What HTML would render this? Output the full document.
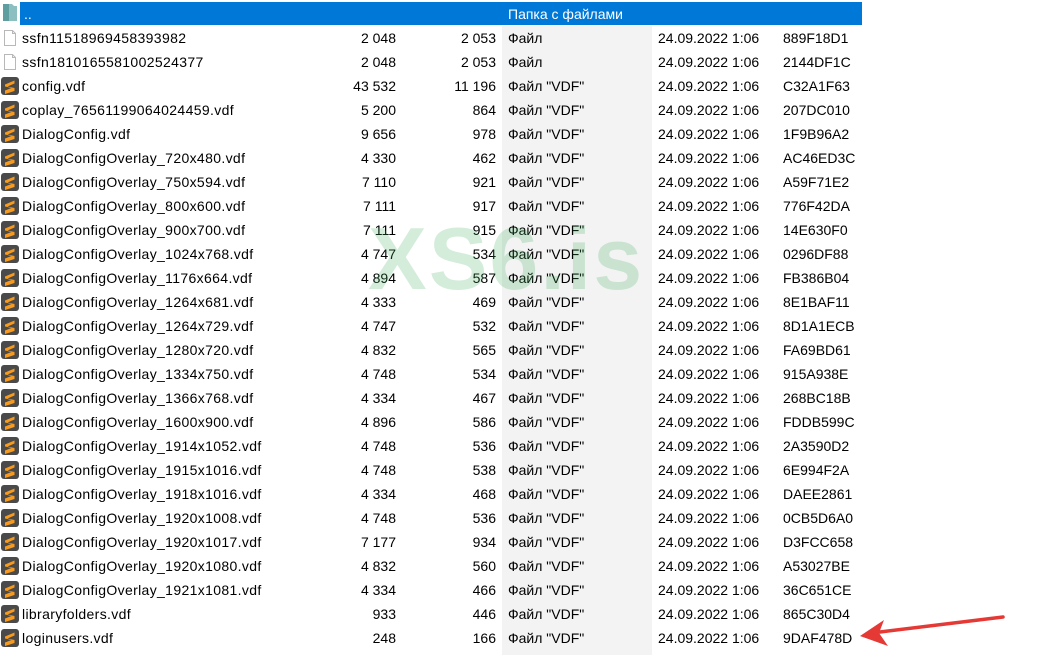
<!DOCTYPE html>
<html><head><meta charset="utf-8"><style>
html,body{margin:0;padding:0;background:#fff;width:1059px;height:655px;overflow:hidden;position:relative;font-family:"Liberation Sans",sans-serif;font-size:14px;color:#000}
.band{position:absolute;left:502px;top:26px;width:150px;height:629px;background:#f3f3f3}
.row{position:absolute;left:0;height:24px;width:862px;line-height:24px}
.row span{position:absolute;white-space:nowrap}
.n{left:22px;letter-spacing:0.35px}.s{right:466px}.p{right:366px}.t{left:508px}.d{left:658px}.c{left:783px}
.sel{background:#0078d7;color:#fff;left:20px;width:842px;top:2px;height:23px}
.ic{position:absolute;left:1px;top:3px;width:18px;height:18px}
.wm{position:absolute;left:368px;top:208px;font-size:88px;font-weight:bold;color:#3fae5c;opacity:.22;letter-spacing:2px;font-family:"Liberation Sans",sans-serif}
</style></head><body>
<div class="band"></div>
<div class="row" style="top:2px">
<svg class="ic" style="top:0;left:1px;width:18px;height:21px" viewBox="0 0 18 21"><path d="M2 2h9l2 2h3v15H2z" fill="#8cc0c0"/><path d="M2 2h6v17H2z" fill="#5e9ea0"/></svg>
<div class="sel" style="position:absolute;top:0"></div>
<span style="left:24px;color:#fff;top:0">..</span>
<span style="left:508px;color:#fff">Папка с файлами</span>
</div>
<div id="rows"></div>
<div class="wm">XS6.is</div>
<svg style="position:absolute;left:0;top:0" width="1059" height="655"><line x1="1003" y1="617" x2="880" y2="632" stroke="#e53935" stroke-width="3.5" stroke-linecap="round"/><path d="M860 636 L884 620 L879 633 L888 646 Z" fill="#e53935"/></svg>
<script>
var data=[
["ssfn11518969458393982","2 048","2 053","Файл","889F18D1",0],
["ssfn1810165581002524377","2 048","2 053","Файл","2144DF1C",0],
["config.vdf","43 532","11 196","","C32A1F63",1],
["coplay_76561199064024459.vdf","5 200","864","","207DC010",1],
["DialogConfig.vdf","9 656","978","","1F9B96A2",1],
["DialogConfigOverlay_720x480.vdf","4 330","462","","AC46ED3C",1],
["DialogConfigOverlay_750x594.vdf","7 110","921","","A59F71E2",1],
["DialogConfigOverlay_800x600.vdf","7 111","917","","776F42DA",1],
["DialogConfigOverlay_900x700.vdf","7 111","915","","14E630F0",1],
["DialogConfigOverlay_1024x768.vdf","4 747","534","","0296DF88",1],
["DialogConfigOverlay_1176x664.vdf","4 894","587","","FB386B04",1],
["DialogConfigOverlay_1264x681.vdf","4 333","469","","8E1BAF11",1],
["DialogConfigOverlay_1264x729.vdf","4 747","532","","8D1A1ECB",1],
["DialogConfigOverlay_1280x720.vdf","4 832","565","","FA69BD61",1],
["DialogConfigOverlay_1334x750.vdf","4 748","534","","915A938E",1],
["DialogConfigOverlay_1366x768.vdf","4 334","467","","268BC18B",1],
["DialogConfigOverlay_1600x900.vdf","4 896","586","","FDDB599C",1],
["DialogConfigOverlay_1914x1052.vdf","4 748","536","","2A3590D2",1],
["DialogConfigOverlay_1915x1016.vdf","4 748","538","","6E994F2A",1],
["DialogConfigOverlay_1918x1016.vdf","4 334","468","","DAEE2861",1],
["DialogConfigOverlay_1920x1008.vdf","4 748","536","","0CB5D6A0",1],
["DialogConfigOverlay_1920x1017.vdf","7 177","934","","D3FCC658",1],
["DialogConfigOverlay_1920x1080.vdf","4 832","560","","A53027BE",1],
["DialogConfigOverlay_1921x1081.vdf","4 334","466","","36C651CE",1],
["libraryfolders.vdf","933","446","","865C30D4",1],
["loginusers.vdf","248","166","","9DAF478D",1]];
var fileIc='<svg class="ic" viewBox="0 0 18 18"><path d="M3.5 1.5h8l3 3v12h-11z" fill="#fff" stroke="#b8b8b8"/><path d="M11.5 1.5v3h3" fill="none" stroke="#b8b8b8"/></svg>';
var vdfIc='<svg class="ic" viewBox="0 0 18 18"><rect x="0" y="0" width="18" height="18" rx="3" fill="#4a4a4a"/><path d="M4 7.5 L13.5 3.5 V6.5 L6.5 9.5 L13.5 11 V14 L4 17 V13.5 L10.5 11 L4 9.5Z" fill="#f89a1c"/></svg>';
var h='';
data.forEach(function(r,i){
var top=26+24*i;
h+='<div class="row" style="top:'+top+'px">'+(r[5]?vdfIc:fileIc)+'<span class="n">'+r[0]+'</span><span class="s">'+r[1]+'</span><span class="p">'+r[2]+'</span><span class="t">'+(r[3]||'Файл "VDF"')+'</span><span class="d">24.09.2022 1:06</span><span class="c">'+r[4]+'</span></div>';
});
document.getElementById('rows').innerHTML=h;
</script>
</body></html>
